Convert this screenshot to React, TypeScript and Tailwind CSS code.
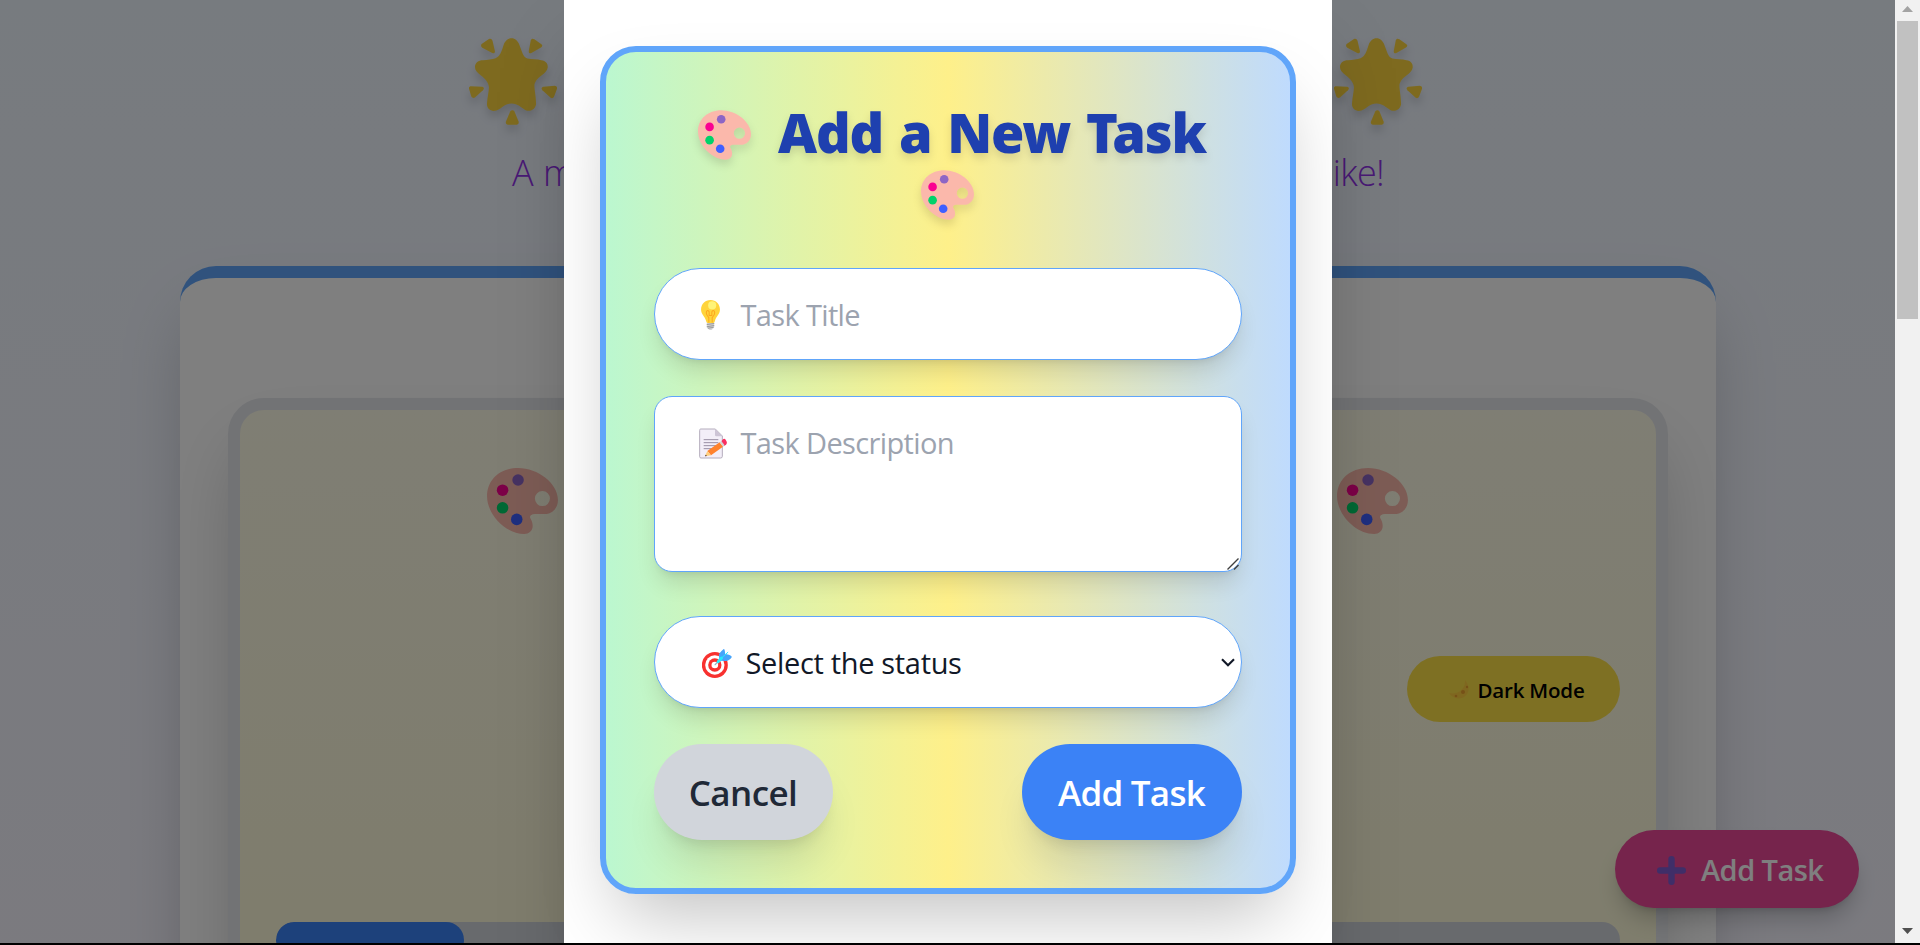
import React from "react";

type IconProps = { className?: string };

function Palette({ className }: IconProps) {
  return (
    <svg viewBox="0 0 160 149" className={className} aria-hidden="true">
      <path
        fillRule="evenodd"
        fill="#FBB8AB"
        d="M70 0C115 0 160 35 160 72C160 92 146 104 130 104H108C99 104 95 109 98 114C101 119 103 125 103 131C103 142 94 149 84 149C42 149 0 105 0 64C0 26 30 0 70 0ZM125 52a17 17 0 1 0 0 34a17 17 0 1 0 0-34Z"
      />
      <circle cx="70" cy="27" r="13" fill="#8D65C5" />
      <circle cx="35" cy="50" r="13" fill="#FA0291" />
      <circle cx="35" cy="90" r="13" fill="#00D26A" />
      <circle cx="67" cy="116" r="13" fill="#3F5FFF" />
    </svg>
  );
}

function GlowingStar({ className }: IconProps) {
  return (
    <svg viewBox="0 0 265 260" className={className} fill="#FCD53F" aria-hidden="true">
      <path d="M128 0C139 0 147 8 151 18C160 40 162 56 176 61C190 64 205 63 218 66C232 68 238 76 237 88C236 98 228 105 218 112C206 121 197 132 197 142C197 155 201 170 202 196C202 210 188 222 172 217C155 208 148 196 128 196C108 196 100 210 83 217C68 222 54 214 54 198C55 178 60 160 60 147C59 135 50 122 36 112C24 102 18 95 18 86C18 74 28 66 42 66C55 65 70 64 80 60C94 54 98 40 105 18C109 8 117 0 128 0Z" />
      <path d="M38 17L60 2C66-1 70 3 71 8L78 38C79 44 75 47 70 44L40 28C36 25 35 20 38 17Z" />
      <path d="M186 6C188 0 192 0 197 3L218 18C222 21 221 24 218 27L188 44C183 47 179 43 180 38Z" />
      <path d="M6 144L40 146C46 148 46 152 42 156L18 178C14 181 9 179 7 175L0 152C-1 147 2 144 6 144Z" />
      <path d="M258 143L224 146C218 148 217 152 221 156L246 179C250 182 254 180 256 176L265 152C266 147 263 143 258 143Z" />
      <path d="M124 220C127 215 134 215 137 220L149 250C151 256 149 259 144 260H118C112 260 110 256 111 251Z" />
    </svg>
  );
}

function LightBulb({ className }: IconProps) {
  return (
    <svg viewBox="0 0 56 89" className={className} aria-hidden="true">
      <path fill="#D3D3D3" d="M17 66H39V80C39 83 36 84 34 85C33 88 31 89 28 89S23 88 22 85C20 84 17 83 17 80Z" />
      <path stroke="#9B9B9B" strokeWidth="3" d="M17 73L39 70M17 79L39 76M20 84L37 81" />
      <path fill="#FFD43B" d="M28 0C44 0 56 12 56 28C56 44 45 46 41 62C40 66 38 68 35 68H21C18 68 16 66 15 62C11 46 0 44 0 28C0 12 12 0 28 0Z" />
      <path fill="none" stroke="#FCA61F" strokeWidth="3" d="M23 67V52C18 47 13 40 17 33C21 28 25 34 24 40V46H32V40C31 34 35 28 39 33C43 40 38 47 33 52V67" />
      <circle cx="33" cy="16" r="12" fill="#FFF478" />
    </svg>
  );
}

function Memo({ className }: IconProps) {
  return (
    <svg viewBox="0 0 84 91" className={className} aria-hidden="true">
      <path fill="#F3EEF8" stroke="#B4ACBC" strokeWidth="3" d="M5 2H49L70 23V84Q70 89 65 89H6Q2 89 2 85V6Q2 2 5 2Z" />
      <path fill="#CDC4D6" d="M48 3L69 24H52Q48 24 48 20Z" />
      <path stroke="#998EA4" strokeWidth="3" d="M14 34H58M14 43H58M14 52H52M14 61H44" />
      <path fill="#FF822D" d="M62 42L72 55L36 81L25 68Z" />
      <path fill="#F92F60" d="M67 39L72 33Q76 29 80 34L83 40Q85 45 81 49L74 54Z" />
      <path fill="#D3D3D3" d="M62 42L67 38L77 51L72 55Z" />
      <path fill="#FFCE7C" d="M25 68L36 81L18 84Z" />
      <path fill="#402A32" d="M20 79L24 83L18 84Z" />
    </svg>
  );
}

function Target({ className }: IconProps) {
  return (
    <svg viewBox="0 0 89 87" className={className} aria-hidden="true">
      <circle cx="38" cy="48" r="39" fill="#F8312F" />
      <circle cx="38" cy="48" r="29" fill="#fff" />
      <circle cx="38" cy="48" r="20" fill="#F8312F" />
      <circle cx="38" cy="48" r="10" fill="#fff" />
      <path stroke="#8FB5C9" strokeWidth="4" strokeLinecap="round" d="M39 47L50 35" />
      <path fill="#46A4FB" d="M50 19C50 14 60 3 65 0Q68 0 69 15L74 16Q88 19 89 24C86 30 76 37 70 36L52 35Z" />
      <path stroke="#26EAFC" strokeWidth="9" strokeLinecap="round" d="M48 38L58 27" />
      <path stroke="#26EAFC" strokeWidth="3" strokeLinecap="round" d="M58 27L77 10" />
    </svg>
  );
}

function Moon({ className }: IconProps) {
  return (
    <svg viewBox="0 0 20 20" className={className} aria-hidden="true">
      <path fill="#FFC83D" fillOpacity="0.7" d="M16 1C21 7 21 14 15 18C10 21 3 19 0 14C9 16 17 10 16 1Z" />
      <circle cx="14" cy="13" r="2" fill="#EDA22F" />
      <circle cx="7" cy="17" r="1.3" fill="#EDA22F" />
      <circle cx="18" cy="8" r="1.2" fill="#EDA22F" />
    </svg>
  );
}

function HeavyPlus({ className }: IconProps) {
  return (
    <svg viewBox="0 0 29 29" className={className} aria-hidden="true">
      <path stroke="#7E5CD0" strokeWidth="6.4" strokeLinecap="round" d="M14.5 3.2V25.8M3.2 14.5H25.8" />
    </svg>
  );
}

function ScrollBar() {
  return (
    <div className="flex h-[943px] w-[25px] shrink-0 flex-col items-center justify-between bg-[#f1f1f1]">
      <div className="flex flex-col items-center pt-[6px]">
        <svg viewBox="0 0 11 6" className="h-[6px] w-[11px]">
          <path fill="#a3a3a3" d="M5.500 0L11 6H0Z" />
        </svg>
        <div className="mt-[9px] h-[298px] w-[21px] bg-[#c1c1c1]" />
      </div>
      <svg viewBox="0 0 11 6" className="mb-[9px] h-[6px] w-[11px]">
        <path fill="#505050" d="M0 0H11L5.500 6Z" />
      </svg>
    </div>
  );
}

function Dashboard() {
  return (
    <div className="flex h-full flex-col items-center bg-[linear-gradient(to_bottom,#eff6ff_0,#faf5ff_1425px,#fdf2f8_2850px)]">
      <header className="mr-[4px] w-[953px] pt-[38px]">
        <div className="flex justify-between">
          <GlowingStar className="h-[87px] w-[88px] drop-shadow-[0_6px_5px_rgba(0,0,0,0.15)]" />
          <GlowingStar className="h-[87px] w-[88px] drop-shadow-[0_6px_5px_rgba(0,0,0,0.15)]" />
        </div>
        <p className="mt-[21px] flex justify-between pr-[38px] pl-[43px] text-[36px] leading-[54px] font-light text-[#9333ea]">
          <span>A m</span>
          <span className="tracking-[-0.7px]">ike!</span>
        </p>
      </header>

      <main className="mt-[66px] w-[1536px] grow rounded-t-[36px] border-t-[12px] border-[#60a5fa] bg-white px-[48px] pt-[120px] shadow-[0_37px_75px_-18px_rgba(0,0,0,0.25)]">
        <section className="flex h-[900px] flex-col rounded-[36px] border-[12px] border-[#e5e7eb] bg-[linear-gradient(to_bottom,#fefce8,#fef9c3_1400px)] px-[36px] pt-[58px] shadow-[0_37px_75px_-18px_rgba(0,0,0,0.25)]">
          <div className="flex justify-between pr-[212px] pl-[211px]">
            <Palette className="h-[66px] w-[71px]" />
            <Palette className="h-[66px] w-[71px]" />
          </div>
          <div className="mt-[122px] flex justify-end">
            <button className="flex h-[66px] w-[213px] items-center rounded-full bg-[#fde047] pl-[42px] text-[20.500px] font-semibold tracking-[-0.2px] text-black">
              <Moon className="mr-[9px] h-[20px] w-[20px]" />
              <span className="pt-[2px]">Dark Mode</span>
            </button>
          </div>
          <div className="mt-[200px] h-[36px] overflow-hidden rounded-[18px] bg-[#d1d5db]">
            <div className="h-full w-[188px] rounded-[18px] bg-[#3b82f6]" />
          </div>
        </section>
      </main>

      <button className="absolute top-[830px] left-[1615px] flex h-[78px] w-[244px] items-center rounded-full bg-[#ec4899] pl-[42px] text-[29px] font-semibold tracking-[-0.55px] text-white shadow-[0_15px_22px_-4px_rgba(0,0,0,0.2),0_6px_9px_-6px_rgba(0,0,0,0.2)]">
        <HeavyPlus className="mt-[2px] mr-[15px] h-[29px] w-[29px]" />
        <span className="pt-[2px]">Add Task</span>
      </button>
    </div>
  );
}

const fieldShadow = "shadow-[0_15px_22px_-4px_rgba(0,0,0,0.12),0_6px_9px_-6px_rgba(0,0,0,0.12)]";
const buttonShadow = "shadow-[0_30px_37px_-7px_rgba(0,0,0,0.1),0_12px_15px_-9px_rgba(0,0,0,0.12)]";

function AddTaskCard() {
  return (
    <div className="h-[848px] w-[696px] rounded-[36px] border-[6px] border-[#60a5fa] bg-[linear-gradient(to_right,#bbf7d0,#fef08a,#bfdbfe)] p-[48px] shadow-[0_37px_75px_-18px_rgba(0,0,0,0.25)]">
      <h2 className="flex flex-col items-center font-['Noto_Sans',sans-serif] text-[54px] leading-[60px] font-black tracking-[-1.2px] text-[#1e40af] drop-shadow-[0_5px_4px_rgba(0,0,0,0.12)]">
        <span className="flex h-[60px] items-center pl-[9px]">
          <Palette className="mt-[9px] mr-[27px] h-[50px] w-[53px]" />
          <span className="pt-[4px] whitespace-nowrap [word-spacing:3px]">Add a New Task</span>
        </span>
        <span className="flex h-[60px] items-center">
          <Palette className="mt-[9px] h-[50px] w-[53px]" />
        </span>
      </h2>

      <div className={"mt-[48px] flex h-[92px] items-center rounded-full border border-[#60a5fa] bg-white pl-[46px] text-[29px] text-[#9ca3af] " + fieldShadow}>
        <LightBulb className="mt-[2px] mr-[21px] h-[30px] w-[19px]" />
        <span className="pt-[2px] tracking-[-0.65px]">Task Title</span>
      </div>

      <div className={"mt-[36px] flex h-[176px] justify-between rounded-[18px] border border-[#60a5fa] bg-white pt-[28px] pl-[44px] text-[29px] leading-[36px] text-[#9ca3af] " + fieldShadow}>
        <div className="flex">
          <Memo className="mt-[3px] mr-[14px] h-[31px] w-[28px]" />
          <span className="tracking-[-0.63px]">Task Description</span>
        </div>
        <svg viewBox="0 0 12 12" className="mr-[2px] mb-[1px] h-[12px] w-[12px] self-end" fill="none" stroke="#3f3f3f" strokeWidth="1.400">
          <path d="M0.500 11.500L11.500 0.500M7 11.500L11.500 7" />
        </svg>
      </div>

      <div className={"mt-[44px] flex h-[92px] items-center rounded-full border border-[#60a5fa] bg-white pr-[6px] pl-[47px] text-[29px] text-[#111827] " + fieldShadow}>
        <Target className="mt-[3px] mr-[14px] h-[29px] w-[30px]" />
        <span className="grow pt-[2px] tracking-[-0.33px]">Select the status</span>
        <svg viewBox="0 0 14 9" className="h-[9px] w-[14px]" fill="none" stroke="#111827" strokeWidth="2.100">
          <path d="M1 1.200L7 7.200L13 1.200" />
        </svg>
      </div>

      <div className="mt-[36px] flex justify-between text-[35px] font-semibold">
        <button className={"h-[96px] w-[179px] rounded-full bg-[#d1d5db] pt-[3px] tracking-[-0.6px] text-[#1f2937] " + buttonShadow}>
          Cancel
        </button>
        <button className={"h-[96px] w-[220px] rounded-full bg-[#3b82f6] pt-[3px] tracking-[-0.75px] text-white " + buttonShadow}>
          Add Task
        </button>
      </div>
    </div>
  );
}

export default function App() {
  return (
    <div className="h-[945px] w-[1920px] overflow-hidden bg-black font-['Open_Sans',sans-serif]">
      <div className="flex h-[943px]">
        <div className="relative h-[943px] w-[1895px] shrink-0 overflow-hidden">
          <Dashboard />
          <div className="absolute inset-0 flex justify-center bg-black/50">
            <div className="h-[1000px] w-[768px] bg-white px-[36px] pt-[46px] shadow-[0_37px_75px_-18px_rgba(0,0,0,0.25)]">
              <AddTaskCard />
            </div>
          </div>
        </div>
        <ScrollBar />
      </div>
    </div>
  );
}
